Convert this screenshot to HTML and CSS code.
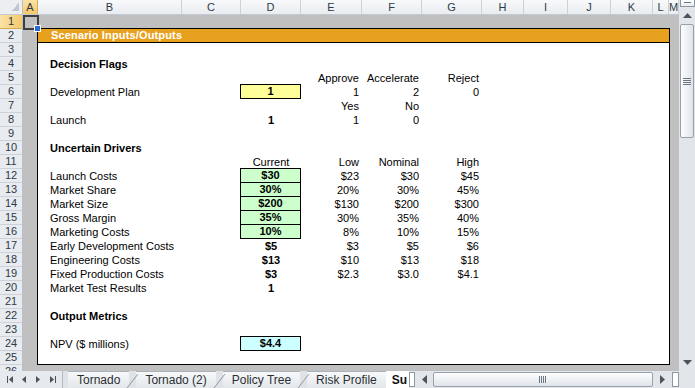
FILE: index.html
```html
<!DOCTYPE html>
<html lang="en">
<head>
  <meta charset="UTF-8" />
  <title>Scenario Inputs/Outputs</title>
  <link rel="stylesheet" href="styles.css">
</head>
<body>

<div class="app">
  <div class="main">
    <div class="sheet">
      <!-- column letters -->
      <div class="colhdr">
        <span class="corner"></span>
        <span class="sel">A</span>
        <span>B</span>
        <span>C</span>
        <span>D</span>
        <span>E</span>
        <span>F</span>
        <span>G</span>
        <span>H</span>
        <span>I</span>
        <span>J</span>
        <span>K</span>
        <span>L</span>
        <span>M</span>
      </div>

      <div class="body">
        <!-- row numbers -->
        <div class="rowhdr">
          <span class="sel">1</span><span>2</span><span>3</span><span>4</span><span>5</span>
          <span>6</span><span>7</span><span>8</span><span>9</span><span>10</span>
          <span>11</span><span>12</span><span>13</span><span>14</span><span>15</span>
          <span>16</span><span>17</span><span>18</span><span>19</span><span>20</span>
          <span>21</span><span>22</span><span>23</span><span>24</span><span>25</span>
          <span>26</span>
        </div>

        <div class="area">
          <div class="a1"></div>

          <div class="panel">
            <div class="title">Scenario Inputs/Outputs</div>

            <div class="row"></div>
            <div class="row"><span class="b head">Decision Flags</span></div>
            <div class="row"><span class="e">Approve</span><span class="f">Accelerate</span><span class="g">Reject</span></div>
            <div class="row"><span class="b">Development Plan</span><span class="d box yellow">1</span><span class="e">1</span><span class="f">2</span><span class="g">0</span></div>
            <div class="row"><span class="e">Yes</span><span class="f">No</span></div>
            <div class="row"><span class="b">Launch</span><span class="d">1</span><span class="e">1</span><span class="f">0</span></div>
            <div class="row"></div>
            <div class="row"><span class="b head">Uncertain Drivers</span></div>
            <div class="row"><span class="d plain">Current</span><span class="e">Low</span><span class="f">Nominal</span><span class="g">High</span></div>
            <div class="row"><span class="b">Launch Costs</span><span class="d box green">$30</span><span class="e">$23</span><span class="f">$30</span><span class="g">$45</span></div>
            <div class="row"><span class="b">Market Share</span><span class="d box green">30%</span><span class="e">20%</span><span class="f">30%</span><span class="g">45%</span></div>
            <div class="row"><span class="b">Market Size</span><span class="d box green">$200</span><span class="e">$130</span><span class="f">$200</span><span class="g">$300</span></div>
            <div class="row"><span class="b">Gross Margin</span><span class="d box green">35%</span><span class="e">30%</span><span class="f">35%</span><span class="g">40%</span></div>
            <div class="row"><span class="b">Marketing Costs</span><span class="d box green">10%</span><span class="e">8%</span><span class="f">10%</span><span class="g">15%</span></div>
            <div class="row"><span class="b">Early Development Costs</span><span class="d">$5</span><span class="e">$3</span><span class="f">$5</span><span class="g">$6</span></div>
            <div class="row"><span class="b">Engineering Costs</span><span class="d">$13</span><span class="e">$10</span><span class="f">$13</span><span class="g">$18</span></div>
            <div class="row"><span class="b">Fixed Production Costs</span><span class="d">$3</span><span class="e">$2.3</span><span class="f">$3.0</span><span class="g">$4.1</span></div>
            <div class="row"><span class="b">Market Test Results</span><span class="d">1</span></div>
            <div class="row"></div>
            <div class="row"><span class="b head">Output Metrics</span></div>
            <div class="row"></div>
            <div class="row"><span class="b">NPV ($ millions)</span><span class="d box cyan">$4.4</span></div>
            <div class="row"></div>
          </div>
        </div>
      </div>
    </div>

    <!-- vertical scrollbar -->
    <div class="vscroll">
      <div class="split"></div>
      <div class="vbtn">
        <svg width="9" height="5" viewBox="0 0 9 5"><path d="M0 5 L4.5 0 L9 5 Z" fill="#4b545e"/></svg>
      </div>
      <div class="vthumb"><span class="hgrip"></span></div>
      <div class="vtrack"></div>
      <div class="vbtn">
        <svg width="9" height="5" viewBox="0 0 9 5"><path d="M0 0 L4.5 5 L9 0 Z" fill="#4b545e"/></svg>
      </div>
    </div>
  </div>

  <!-- sheet tabs + horizontal scrollbar -->
  <div class="tabbar">
    <div class="nav">
      <svg width="60" height="17" viewBox="0 0 60 17">
        <rect x="7" y="5" width="1" height="7" fill="#4b545e"/>
        <path d="M13 5 L9 8.5 L13 12 Z" fill="#4b545e"/>
        <path d="M26 5 L22 8.5 L26 12 Z" fill="#4b545e"/>
        <path d="M36 5 L40 8.5 L36 12 Z" fill="#4b545e"/>
        <path d="M50 5 L54 8.5 L50 12 Z" fill="#4b545e"/>
        <rect x="55" y="5" width="1" height="7" fill="#4b545e"/>
      </svg>
    </div>
    <div class="tabs">
      <span class="tab">Tornado</span>
      <span class="sep"></span>
      <span class="tab">Tornado (2)</span>
      <span class="sep"></span>
      <span class="tab">Policy Tree</span>
      <span class="sep"></span>
      <span class="tab">Risk Profile</span>
      <span class="tab active">Su</span>
    </div>
    <div class="tabsplit"></div>
    <div class="hscroll">
      <div class="hbtn">
        <svg width="5" height="9" viewBox="0 0 5 9"><path d="M5 0 L0 4.5 L5 9 Z" fill="#4b545e"/></svg>
      </div>
      <div class="hthumb"><span class="vgrip"></span></div>
      <div class="hbtn">
        <svg width="5" height="9" viewBox="0 0 5 9"><path d="M0 0 L5 4.5 L0 9 Z" fill="#4b545e"/></svg>
      </div>
      <div class="hsplit"></div>
    </div>
    <div class="cornerbox"></div>
  </div>
</div>

</body>
</html>
```

FILE: styles.css
```css
* {
  box-sizing: border-box;
}

body {
  margin: 0;
  font-family: "Liberation Sans", Arial, sans-serif;
  font-size: 11px;
  color: #000;
}

.app {
  width: 695px;
  height: 388px;
  overflow: hidden;
  display: flex;
  flex-direction: column;
  background: #fff;
}

.main {
  display: flex;
  height: 371px;
  flex: none;
}

.sheet {
  width: 679px;
  display: flex;
  flex-direction: column;
  overflow: hidden;
}

/* column header */
.colhdr {
  display: grid;
  grid-template-columns: 23px 15px 144px 59px 60px 61px 60px 60px 42px 44px 43px 42px 16px 10px;
  height: 15px;
  flex: none;
  background: linear-gradient(#f8f9fb, #e9ecf0);
  border-bottom: 1px solid #c3c9d1;
}

.colhdr span {
  border-right: 1px solid #cdd2d9;
  text-align: center;
  line-height: 14px;
  color: #2e3a46;
  overflow: hidden;
}

.colhdr .corner {
  background: linear-gradient(135deg, transparent 50%, #c2c7cd 50%) no-repeat right 3px bottom 3px / 8px 8px, #eceef1;
  border-right-color: #b8c0ca;
}

.colhdr .sel {
  background: linear-gradient(#fbe2a6, #f3c96c);
  border-right-color: #d9aa4c;
}

.body {
  display: flex;
  flex: 1;
  min-height: 0;
}

/* row header */
.rowhdr {
  width: 23px;
  flex: none;
  background: #e8ebef;
  border-right: 1px solid #b8c0ca;
  overflow: hidden;
}

.rowhdr span {
  display: block;
  height: 14px;
  line-height: 13px;
  text-align: center;
  color: #2e3a46;
  border-bottom: 1px solid #cdd2d9;
}

.rowhdr .sel {
  background: linear-gradient(90deg, #fbe2a6, #f3c96c);
  border-bottom-color: #d9aa4c;
}

/* grey sheet area with the bordered report block */
.area {
  flex: 1;
  background: #c0c0c0;
  display: grid;
  grid-template-columns: 15px 1fr;
  grid-template-rows: 14px 1fr;
  overflow: hidden;
}

.a1 {
  grid-column: 1;
  grid-row: 1;
  margin: 0 -1px -1px 0;
  border: 2px solid #3e3e3e;
  position: relative;
  z-index: 1;
}

.a1::after {
  content: "";
  position: absolute;
  right: -4px;
  bottom: -4px;
  width: 5px;
  height: 5px;
  background: #2d6ad0;
  border: 1px solid #fff;
}

.panel {
  grid-column: 2;
  grid-row: 2;
  align-self: start;
  justify-self: start;
  margin: -1px 0 0 -1px;
  width: 633px;
  height: 337px;
  border: 1px solid #000;
  background: #fff;
  overflow: hidden;
}

.title {
  height: 14px;
  background: #e8a11f;
  border-bottom: 1px solid #000;
  color: #fff;
  font-weight: bold;
  line-height: 13px;
  padding-left: 13px;
  letter-spacing: 0.15px;
}

.row {
  display: grid;
  grid-template-columns: 144px 59px 60px 61px 60px 60px;
  height: 14px;
  line-height: 14px;
}

.row span {
  white-space: nowrap;
}

.b {
  grid-column: 1;
  padding-left: 12px;
}

.head {
  font-weight: bold;
}

.d {
  grid-column: 3;
  text-align: center;
  font-weight: bold;
}

.d.plain {
  font-weight: normal;
}

.e, .f, .g {
  text-align: right;
  padding-right: 3px;
}

.e { grid-column: 4; }
.f { grid-column: 5; }
.g { grid-column: 6; }

.box {
  margin: -1px 0 0 -1px;
  border: 1px solid #000;
  line-height: 13px;
}

.yellow { background: #ffff99; }
.green { background: #ccffcc; }
.cyan { background: #ccffff; }

/* vertical scrollbar */
.vscroll {
  width: 16px;
  background: #e2e6eb;
  display: flex;
  flex-direction: column;
  align-items: center;
}

.split {
  width: 15px;
  height: 7px;
  background: linear-gradient(#fff, #e9ecf0);
  border: 1px solid #8e98a4;
  border-top: none;
  position: relative;
}

.split::after {
  content: "";
  position: absolute;
  left: 3px;
  right: 3px;
  top: 2px;
  height: 1px;
  background: #6b7580;
}

.vbtn {
  height: 17px;
  width: 16px;
  display: flex;
  align-items: center;
  justify-content: center;
}

.vthumb {
  width: 14px;
  height: 114px;
  border: 1px solid #97a1ad;
  border-radius: 2px;
  background: linear-gradient(90deg, #fdfdfe, #dfe4ea);
  display: flex;
  align-items: center;
  justify-content: center;
}

.hgrip {
  width: 8px;
  height: 7px;
  background: repeating-linear-gradient(#6c7580 0 1px, transparent 1px 2px);
}

.vtrack {
  flex: 1;
}

/* tab strip */
.tabbar {
  height: 17px;
  display: flex;
  background: #e6e9ed;
}

.nav {
  width: 63px;
  flex: none;
  border-right: 1px solid #b3bbc4;
}

.tabs {
  width: 346px;
  flex: none;
  display: flex;
  overflow: hidden;
  padding-left: 5px;
  background: #dfe3e8;
}

.tab {
  padding: 0 9px;
  font-size: 12px;
  line-height: 16px;
  color: #2b2f34;
  white-space: nowrap;
  background: linear-gradient(#f7f8fa, #e3e7eb);
  border-top: 1px solid #a9b1ba;
}

.tab.active {
  background: #fff;
  font-weight: bold;
  color: #111;
  padding: 0 20px 0 6px;
  border-top-color: #fff;
}

.sep {
  width: 1px;
  flex: none;
  background: #8e969f;
  transform: skewX(-38deg);
  margin: 3px 3px 0;
}

.tabsplit {
  width: 6px;
  flex: none;
  background: #fff;
  border: 1px solid #8e98a4;
  margin: 1px 0;
}

.hscroll {
  width: 264px;
  flex: none;
  display: flex;
  align-items: center;
  background: #e2e6eb;
}

.hbtn {
  width: 18px;
  height: 17px;
  display: flex;
  align-items: center;
  justify-content: center;
}

.hthumb {
  width: 220px;
  height: 15px;
  border: 1px solid #97a1ad;
  border-radius: 2px;
  background: linear-gradient(#fdfdfe, #dfe4ea);
  display: flex;
  align-items: center;
  justify-content: center;
}

.vgrip {
  width: 8px;
  height: 7px;
  background: repeating-linear-gradient(90deg, #6c7580 0 1px, transparent 1px 2px);
}

.hsplit {
  width: 7px;
  height: 15px;
  margin-left: 1px;
  background: #fff;
  border: 1px solid #8e98a4;
}

.cornerbox {
  flex: 1;
  background: #e2e6eb;
}
```
